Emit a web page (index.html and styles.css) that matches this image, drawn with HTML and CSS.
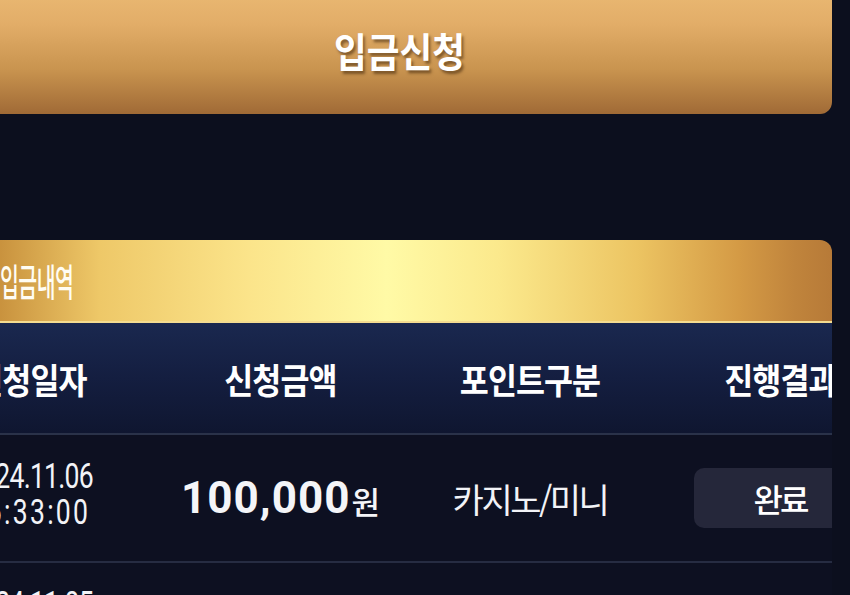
FILE: index.html
```html
<!DOCTYPE html>
<html lang="ko">
<head>
<meta charset="utf-8">
<title>입금신청</title>
<link rel="stylesheet" href="styles.css">
</head>
<body>
<div class="page">
  <button class="deposit-btn" type="button"><span class="deposit-label">입금신청</span></button>
  <section class="history">
    <h2 class="history-title"><span class="history-label">입금내역</span></h2>
    <div class="table">
      <div class="row thead">
        <div class="cell"><span class="th">신청일자</span></div>
        <div class="cell"><span class="th">신청금액</span></div>
        <div class="cell"><span class="th">포인트구분</span></div>
        <div class="cell"><span class="th">진행결과</span></div>
      </div>
      <div class="row tr">
        <div class="cell date"><span class="date-text"><span class="day">2024.11.06</span><span class="time">16:33:00</span></span></div>
        <div class="cell amount"><span class="num">100,000</span><span class="won">원</span></div>
        <div class="cell point">카지노/미니</div>
        <div class="cell"><span class="status">완료</span></div>
      </div>
      <div class="row tr">
        <div class="cell date"><span class="date-text"><span class="day">2024.11.05</span><span class="time">12:10:00</span></span></div>
        <div class="cell amount"><span class="num">50,000</span><span class="won">원</span></div>
        <div class="cell point">카지노/미니</div>
        <div class="cell"><span class="status">완료</span></div>
      </div>
    </div>
  </section>
</div>
</body>
</html>
```
FILE: styles.css
```css
* { box-sizing: border-box; }
html, body {
  margin: 0;
  height: 595px;
  overflow: hidden;
  background: #0c0f1e;
}
body {
  font-family: "Noto Sans CJK KR", "Noto Sans", sans-serif;
  color: #ffffff;
}
.page {
  width: 927px;
  margin-left: -95px;
}
.deposit-btn {
  display: flex;
  align-items: center;
  justify-content: center;
  width: 864px;
  height: 128px;
  margin: -14px 0 0 63px;
  border: 0;
  border-radius: 12px;
  background: linear-gradient(180deg, #ebba74 0%, #e2ad68 30%, #c9944f 65%, #a06a36 100%);
  font-family: inherit;
  color: #fff;
  padding: 0;
}
.deposit-label {
  font-size: 40px;
  font-weight: 700;
  letter-spacing: 0;
  display: inline-block;
  transform: scaleX(0.89);
  text-shadow: 2px 3px 3px rgba(60, 35, 10, 0.55);
}
.history {
  margin-top: 126px;
  border-radius: 12px 12px 0 0;
  overflow: hidden;
}
.history-title {
  margin: 0;
  height: 83px;
  display: flex;
  align-items: center;
  padding: 0 0 2px 95px;
  border-bottom: 2px solid #f4dc90;
  background: linear-gradient(90deg,
    #b98535 0%, #c8913d 10%, #eec868 21%, #fbe48a 37%, #fffaa6 52%,
    #fbe98c 64%, #ecc462 79%, #d49a45 90%, #c0843c 96%, #b77a38 100%);
}
.history-label {
  display: inline-block;
  font-size: 38px;
  font-weight: 500;
  letter-spacing: -1px;
  transform: scaleX(0.54);
  transform-origin: left center;
  color: #fffdf4;
}
.row {
  display: grid;
  grid-template-columns: repeat(4, 250px);
}
.cell {
  display: flex;
  align-items: center;
  justify-content: center;
}
.thead {
  height: 112px;
  background: linear-gradient(180deg, #1a284f 0%, #141e40 50%, #0f1630 100%);
  border-bottom: 2px solid #2a3249;
}
.th {
  font-size: 35px;
  font-weight: 700;
  letter-spacing: -1px;
  display: inline-block;
  transform: scaleX(0.9);
  white-space: nowrap;
}
.tr {
  height: 128px;
  background: #0d1021;
  border-bottom: 2px solid #262c42;
}
.date {
  padding-bottom: 6px;
}
.date-text {
  display: flex;
  flex-direction: column;
  align-items: center;
  font-family: "Roboto", "Liberation Sans", sans-serif;
  font-size: 35px;
  line-height: 36px;
  color: #f2f3f7;
  transform: scaleX(0.76);
}
.day {
  letter-spacing: -1px;
}
.time {
  letter-spacing: 3px;
}
.num {
  font-family: "Roboto", "Liberation Sans", sans-serif;
  font-size: 44px;
  font-weight: 700;
  letter-spacing: 1px;
  color: #f4f5f8;
}
.won {
  font-size: 31px;
  font-weight: 500;
  margin-left: 1px;
  margin-top: 4px;
  letter-spacing: -1px;
  color: #f4f5f8;
}
.point {
  font-size: 34px;
  font-weight: 400;
  letter-spacing: -2.5px;
  color: #f2f3f7;
}
.status {
  display: flex;
  align-items: center;
  justify-content: center;
  width: 172px;
  height: 60px;
  border-radius: 10px;
  background: #25273a;
  font-size: 32px;
  font-weight: 500;
  letter-spacing: -3px;
  color: #ffffff;
}
```
